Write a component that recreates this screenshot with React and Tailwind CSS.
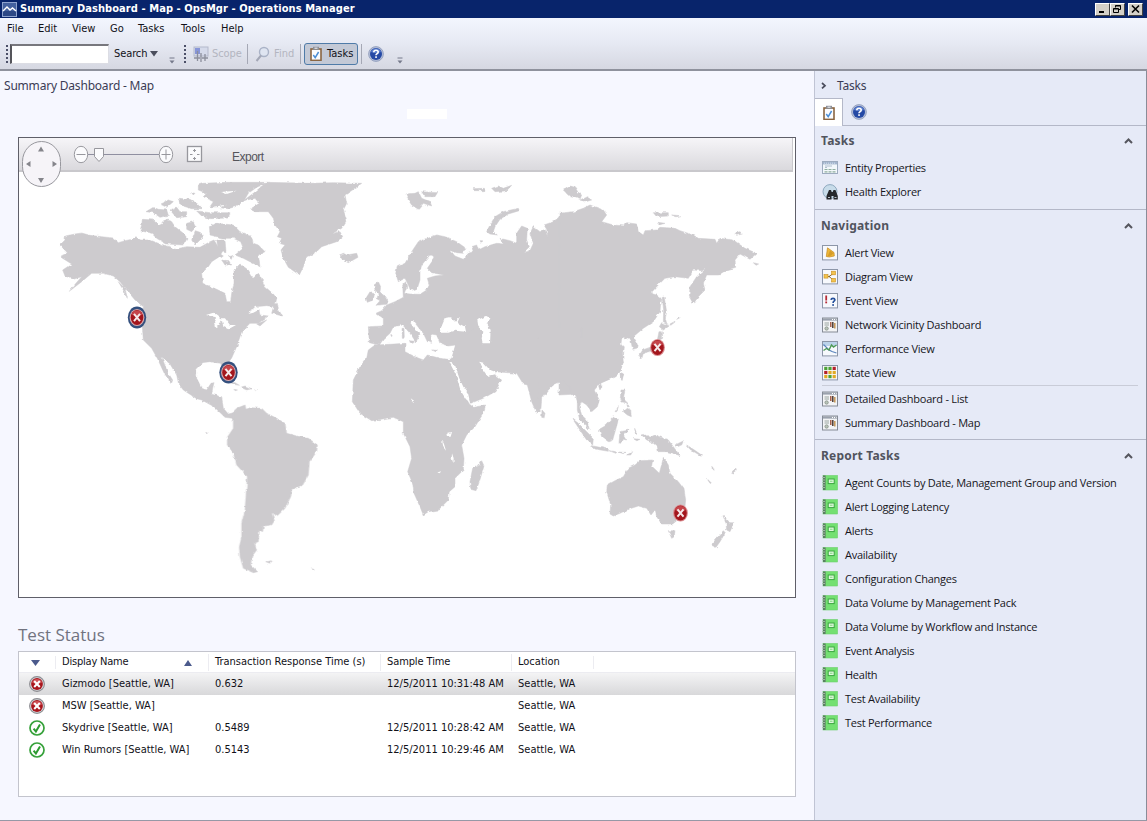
import React from "react";

const LAND = "#cdcbce";

function ErrorIcon({ size = 16, ring = "#8d8d92" }) {
  return (
    <svg width={size} height={size} viewBox="0 0 16 16" className="block shrink-0">
      <circle cx="8" cy="8" r="7.4" fill="#d9d9dc" stroke={ring} strokeWidth="1.1" />
      <circle cx="8" cy="8" r="5.9" fill="#a8161d" />
      <path d="M3 6.5a5.3 5.3 0 0 1 10 0q-5 2.5-10 0z" fill="#cf5257" />
      <path d="M5.2 5l5.6 6M10.8 5l-5.600 6" stroke="#fff" strokeWidth="2" />
    </svg>
  );
}

function OkIcon() {
  return (
    <svg width="16" height="16" viewBox="0 0 16 16" className="block shrink-0">
      <circle cx="8" cy="8" r="7" fill="#fff" stroke="#36a13a" strokeWidth="1.7" />
      <path d="M4.6 8.6l2.3 2.8L11 4.6" fill="none" stroke="#2c9a30" strokeWidth="2" />
    </svg>
  );
}

function HelpIcon() {
  return (
    <svg width="16" height="16" viewBox="0 0 16 16" className="block shrink-0">
      <circle cx="8" cy="8" r="7.4" fill="#b4bfd8" stroke="#8a97b8" strokeWidth=".8" />
      <circle cx="8" cy="8" r="6" fill="#2549a5" />
      <path d="M3 6a5.3 5.3 0 0 1 10 0q-5 2-10 0z" fill="#5c7fce" />
      <path d="M5.8 6.2q0-2 2.2-2t2.2 1.8q0 1.2-1.2 1.8-1 .5-1 1.5" fill="none" stroke="#fff" strokeWidth="1.6" />
      <rect x="7.2" y="10.3" width="1.7" height="1.6" fill="#fff" />
    </svg>
  );
}

function ClipIcon() {
  return (
    <svg width="16" height="16" viewBox="0 0 16 16" className="block shrink-0">
      <rect x="2.2" y="2.2" width="11.6" height="12.8" fill="#8a6542" />
      <rect x="3.8" y="3.8" width="8.4" height="9.8" fill="#fbfcff" />
      <rect x="5" y=".8" width="6" height="3" fill="#8b8e96" />
      <rect x="6.5" y="1.6" width="3" height="1.2" fill="#e6e6ea" />
      <path d="M5.3 9l1.9 2.6L10.6 6" fill="none" stroke="#4b8ed6" strokeWidth="1.5" />
    </svg>
  );
}

const Frame = ({ children }) => (
  <svg width="16" height="16" viewBox="0 0 16 16" className="block shrink-0">
    <rect x=".5" y=".5" width="15" height="14.4" fill="#f7f9fd" stroke="#8c96a8" />
    {children}
  </svg>
);

const dots = ["#e0aa25", "#4ca136", "#b3202a"];
const stateOrder = [1, 1, 2, 2, 0, 0, 0, 1, 0];

function Icon({ kind }) {
  switch (kind) {
    case "entity":
      return (
        <svg width="16" height="16" viewBox="0 0 16 16" className="block shrink-0">
          <rect x=".5" y="1.5" width="15" height="12" fill="#f2f7fb" stroke="#9dabbf" />
          <rect x="1" y="2" width="14" height="2.4" fill="#a3b5ce" />
          <path d="M2 3.200h12" stroke="#d5dfeb" strokeDasharray="1 1" />
          <path d="M3 6h7M3 7.500h2" stroke="#9fb0c4" strokeWidth=".8" />
          <path d="M2.500 9.500h3M6.500 9.500h3M10.500 9.500h3M2.500 11.800h3M6.500 11.800h3M10.500 11.800h3" stroke="#8fae9f" strokeWidth="1.200" />
        </svg>
      );
    case "health":
      return (
        <svg width="16" height="16" viewBox="0 0 16 16" className="block shrink-0">
          <circle cx="8" cy="7.600" r="7" fill="#c8dcea" stroke="#8fa9bf" />
          <path d="M4.500 15.500V12L7 6h2l.7 2h1L11.500 6h2l2.300 6v3.500h-4.300V12h-2v3.500z" fill="#26282c" />
          <path d="M6 13.500h2M12.500 13.500h2" stroke="#b9c2cc" />
        </svg>
      );
    case "alert":
      return (
        <Frame>
          <path d="M5.500 2.800L12 7.500l.3 3.500-5 1-3-.5z" fill="#eeb83a" stroke="#c58a1c" strokeWidth=".7" />
          <path d="M8 5.500l3.500 2.800-2.500 2.500-3.500.5z" fill="#c98f1f" opacity=".65" />
        </Frame>
      );
    case "diagram":
      return (
        <Frame>
          <path d="M5 7.500h3M12 4L7 7.500l5 4" fill="none" stroke="#8a6a30" />
          <rect x="2" y="5.500" width="4" height="3.600" fill="#f3c34f" stroke="#c98f1f" strokeWidth=".6" />
          <rect x="9.500" y="2.200" width="4" height="3.600" fill="#f3c34f" stroke="#c98f1f" strokeWidth=".6" />
          <rect x="9.500" y="9.400" width="4" height="3.600" fill="#f3c34f" stroke="#c98f1f" strokeWidth=".6" />
        </Frame>
      );
    case "event":
      return (
        <Frame>
          <path d="M4.200 2.500v5" stroke="#b62a35" strokeWidth="1.800" />
          <rect x="3.300" y="8.500" width="1.800" height="1.800" fill="#b62a35" />
          <path d="M9 6.800q.2-1.500 2-1.500t1.900 1.500q0 1-1 1.500-.8.400-.8 1.600" fill="none" stroke="#26509c" strokeWidth="1.700" />
          <rect x="10.200" y="11.200" width="1.800" height="1.600" fill="#26509c" />
        </Frame>
      );
    case "dashboard":
      return (
        <svg width="16" height="16" viewBox="0 0 16 16" className="block shrink-0">
          <rect x=".5" y="1" width="15" height="14" fill="#f3f4f6" stroke="#858b96" />
          <rect x="1" y="1.400" width="14" height="2.200" fill="#9aa1ad" />
          <path d="M10 2.500h1M12 2.500h1M14 2.500h.6" stroke="#fff" />
          <path d="M2.500 6h4.500M2.500 8h4.500" stroke="#9aa5a0" />
          <circle cx="4.600" cy="11.500" r="1.700" fill="#b9c4b9" stroke="#7e8a80" strokeWidth=".7" />
          <path d="M8.800 5v5" stroke="#a2543a" strokeWidth="1.400" />
          <path d="M10.800 5v6" stroke="#4a3c34" strokeWidth="1.500" />
          <path d="M12.800 6v5.500" stroke="#c28f4a" strokeWidth="1.400" />
        </svg>
      );
    case "perf":
      return (
        <Frame>
          <rect x="1" y="1" width="14" height="4" fill="#bcd3ea" />
          <path d="M1.500 3.500L7 9l3 1.500 4.500 1.500" fill="none" stroke="#5b84bd" strokeWidth="1.200" />
          <path d="M1.500 9.500l3-2 2.500 1.500 2.500-5 2 2 3-2" fill="none" stroke="#4f9a56" strokeWidth="1.400" />
        </Frame>
      );
    case "state":
      return (
        <Frame>
          {stateOrder.map((c, i) => (
            <rect key={i} x={2.2 + (i % 3) * 4.2} y={1.8 + Math.floor(i / 3) * 4.1} width="3.200" height="3.200" fill={dots[c]} />
          ))}
        </Frame>
      );
    default:
      return (
        <svg width="16" height="16" viewBox="0 0 16 16" className="block shrink-0">
          <rect x="1" y=".5" width="14.500" height="14.500" fill="#74e072" stroke="#6ccf6c" strokeWidth=".6" />
          <rect x="1" y=".5" width="2.600" height="14.500" fill="#5b7f63" />
          <path d="M0 2.500h3M0 5h3M0 7.500h3M0 10h3M0 12.500h3" stroke="#a9bcae" strokeWidth=".9" />
          <rect x="6.200" y="4" width="6" height="4.600" fill="#e0f7dd" stroke="#3aa641" />
          <rect x="8" y="5.700" width="2.500" height="1.200" fill="#8fdc8e" />
        </svg>
      );
  }
}

function Caret() {
  return (
    <svg width="9" height="6" viewBox="0 0 9 6" className="block">
      <path d="M1 5l3.500-3.500L8 5" fill="none" stroke="#55565e" strokeWidth="2" />
    </svg>
  );
}

function SectionHead({ children }) {
  return (
    <div className="flex h-[30px] items-center justify-between pr-[13px] pl-[6px]">
      <span className="font-['Noto_Sans',sans-serif] text-[12px] leading-[16px] font-bold tracking-[0.2px] text-[#51545e]">{children}</span>
      <Caret />
    </div>
  );
}

function Item({ icon, children }) {
  return (
    <div className="flex h-6 items-center gap-[7px] pl-[7px]">
      <Icon kind={icon} />
      <span className="font-['Open_Sans',sans-serif] text-[11px] leading-[16px] tracking-[-0.25px] whitespace-nowrap text-[#16161c]">{children}</span>
    </div>
  );
}

function Overflow() {
  return (
    <svg width="6" height="7" viewBox="0 0 6 7" className="block">
      <path d="M.5 1h5" stroke="#75798a" />
      <path d="M.5 3.500h5L3 6.500z" fill="#75798a" />
    </svg>
  );
}

function Grip() {
  return (
    <svg width="2" height="18" viewBox="0 0 2 18" className="block">
      <path d="M1 0v18" stroke="#4c5068" strokeWidth="2" strokeDasharray="2 2" />
    </svg>
  );
}

const NA = "M150 345L165 330 166 318 195 312 215 309 240 316 275 320 310 324 325 338 345 332 365 328 378 320 392 330 420 330 450 342 480 350 495 358 530 350 570 352 600 335 612 330 625 352 645 352 628 380 605 395 595 410 575 430 578 460 620 478 645 490 650 515 662 515 665 490 672 460 672 420 690 402 715 420 730 445 745 430 752 440 765 470 790 492 800 505 795 530 770 527 735 530 720 545 745 532 750 555 775 558 745 580 720 580 695 605 680 650 665 684 650 704 650 732 642 735 632 700 600 695 575 698 560 715 560 745 575 775 590 780 603 760 612 758 608 775 605 793 635 800 640 835 655 852 680 846 690 856 676 866 645 862 612 830 575 810 560 806 520 780 506 762 500 735 480 702 455 680 472 725 488 750 484 762 462 728 442 685 425 655 400 630 397 590 400 530 375 510 350 480 330 455 310 438 280 430 245 430 215 455 178 484 196 462 215 440 190 448 165 438 158 420 185 402 150 380 172 368Z";

const C4 = [
  "M397 268L430 270 445 285 470 270 485 275 495 290 520 310 532 325 520 345 470 342 440 325 425 310 390 302 395 285Z",
  "M408 245L430 232 445 238 470 240 475 256 450 262 430 248Z",
  "M450 222L475 210 490 215 470 232Z",
  "M505 205L540 208 560 220 575 236 545 236 510 225Z",
  "M480 240L500 232 510 245 530 245 530 260 500 263Z",
  "M530 280L550 275 558 290 545 305 530 298Z",
  "M556 302L570 307 580 315 570 330 555 345 545 330Z",
  "M560 243L600 248 660 248 655 264 600 266 575 258Z",
  "M598 290L615 280 640 285 660 295 640 312 615 316 600 308Z",
  "M565 165L580 160 650 157 720 157 775 157 740 172 715 190 700 215 675 230 655 236 600 230 610 215 580 200 590 190 565 180Z",
  "M545 188L555 190 550 195Z",
  "M325 455L345 475 352 505 340 480Z",
  "M635 390L655 392 662 405 645 405ZM625 368L640 378 632 384ZM655 380L668 376 664 388Z",
];

const C5 = [
  "M30 175L50 160 100 165 120 185 155 200 160 220 175 225 195 245 175 255 180 290 150 275 130 265 105 255 130 235 122 215 100 205 70 205 30 195Z",
  "M50 210L75 210 78 245 55 240Z",
  "M200 37L330 40 400 38 485 40 465 55 435 75 440 100 430 120 440 150 425 175 395 192 420 185 428 200 410 215 365 230 345 250 320 260 310 290 298 315 265 292 250 265 243 240 255 225 238 220 245 205 232 200 240 185 225 165 220 145 205 125 165 125 150 118 178 100 165 85 130 92 160 70Z",
  "M418 255L430 250 440 255 470 250 474 262 445 278 428 270Z",
  "M215 430L222 405 232 400 235 418 247 438Z",
  "M170 462L200 450 180 468Z",
];

const C6 = [
  "M85 470L130 468 130 445 108 430 125 422 140 405 165 395 190 382 188 345 197 335 200 350 193 370 210 372 240 373 260 360 268 345 262 325 285 318 312 315 275 308 262 295 285 262 270 255 245 285 240 305 240 330 232 355 212 362 205 345 195 325 175 335 167 310 172 290 195 280 215 245 235 215 260 205 290 195 315 200 350 215 378 235 370 250 350 248 330 240 345 258 370 268 385 250 400 245 395 230 410 225 415 240 435 230 470 220 490 222 480 205 510 212 530 220 530 190 545 168 562 175 560 210 568 230 550 248 570 242 580 220 570 190 580 170 600 185 615 178 623 202 620 178 612 165 640 155 665 135 725 122 725 605 345 605 332 575 347 525 325 528 300 520 290 495 272 492 275 520 262 515 250 490 240 478 218 450 208 455 222 475 240 492 228 516 210 490 188 465 160 470 150 490 130 508 118 525 88 518Z",
  "M102 345L115 335 122 350 120 365 135 380 145 395 140 403 108 406 120 392 108 385 118 372 105 360Z",
  "M78 385L90 365 104 368 100 390 82 397Z",
  "M198 72L225 70 235 65 245 85 270 95 275 108 250 100 235 118 215 105 205 90Z",
  "M245 65L292 68 285 80 255 80Z",
  "M440 185L450 165 465 140 490 125 535 115 538 122 505 132 480 148 465 170 460 185 472 195 450 192Z",
  "M398 56L430 55 435 62 405 62Z",
  "M455 55L475 48 490 55 515 46 500 62 465 65Z",
  "M675 60L690 48 705 52 715 68 725 75 720 88 700 80 682 72Z",
  "M186 475L192 475 193 505 187 505ZM207 512L226 514 218 520ZM275 540L292 541 288 545ZM152 494L157 494 155 500ZM420 212L428 212 425 220Z",
];

const C7 = [
  "M-3 100L40 95 70 85 90 75 130 90 140 105 125 125 160 135 195 138 200 128 230 132 235 155 250 165 255 152 290 150 300 142 345 145 360 152 400 165 415 175 465 178 470 190 480 175 520 180 555 205 590 220 570 238 540 222 525 240 527 262 500 270 475 285 440 285 430 310 435 330 415 350 400 372 388 350 390 320 410 290 440 265 425 272 400 270 385 295 345 290 315 295 290 320 272 340 290 345 303 355 300 395 280 425 250 445 220 470 232 490 230 505 218 508 212 480 190 472 170 482 190 500 188 520 190 545 180 575 165 590 120 610 95 640 -3 645Z",
  "M10 30L35 20 45 35 60 40 55 55 30 50ZM60 60L80 50 95 60 75 66Z",
  "M280 98L325 98 325 108 290 110ZM335 105L362 107 350 110ZM293 127L315 130 300 134ZM522 160L540 155 547 162 530 166ZM580 248L596 252 588 256Z",
  "M306 350L312 348 320 395 316 415 320 430 310 425 311 390Z",
  "M298 440L305 428 328 438 310 450Z",
  "M330 432L345 424 344 427 332 436ZM350 418L360 410 360 413Z",
  "M297 455L307 455 308 475 295 482 290 500 270 515 248 520 236 530 248 510 275 500 290 490Z",
  "M238 520L250 520 246 534 240 536Z",
  "M183 580L191 582 186 602ZM115 615L126 615 120 630Z",
];

const C9 = [
  "M105 45L150 43 195 40 195 65 225 80 250 90 262 75 300 85 325 88 345 85 350 140 370 190 388 222 400 232 437 225 430 250 405 290 380 315 365 345 372 385 370 420 345 445 345 470 328 485 325 510 295 540 265 545 250 555 240 530 222 490 218 460 203 425 215 385 210 350 190 310 190 275 160 262 95 272 60 250 37 215 40 150 60 110 80 85 85 60Z",
  "M335 92L347 45 400 -5 725 -5 725 160 695 190 672 150 650 155 625 180 605 205 603 235 590 250 575 215 562 165 550 162 530 130 465 125 465 135 485 150 465 185 430 205 392 220 375 185 360 155 345 125Z",
  "M425 392L432 408 418 455 408 482 392 478 390 455 398 415 415 408Z",
  "M606 240L615 250 612 265 605 262Z",
];

const C10 = [
  "M-5 -5L245 -5 240 40 250 65 240 95 215 115 180 130 155 135 165 155 178 180 172 200 155 215 140 195 125 185 118 200 125 225 140 240 148 268 135 255 118 235 112 210 112 185 105 160 95 165 90 145 72 120 40 135 10 160 -5 175Z",
  "M98 237L115 250 140 275 160 295 158 315 140 300 120 270Z",
  "M155 317L180 322 205 328 205 334 165 327Z",
  "M178 268L195 258 222 230 235 240 228 265 218 300 205 305 185 290Z",
  "M240 275L268 270 265 275 248 280 260 300 250 298 245 310 237 308Z",
  "M243 150L255 150 251 175 260 188 246 186 241 170Z",
  "M250 215L262 205 272 210 274 230 262 225ZM260 185L268 200 262 200ZM225 215L235 200 230 215Z",
  "M207 332L230 336 228 340ZM235 336L255 337 250 341ZM260 345L278 335 272 345Z",
  "M305 285L320 282 330 292 345 285 385 300 400 320 420 347 395 338 380 335 355 335 352 320 335 305 320 300Z",
  "M405 315L430 303 425 315 408 320ZM440 315L460 328 485 345 478 345 450 328ZM500 415L515 430 510 430ZM515 375L522 390 517 390ZM575 400L588 385 582 402Z",
  "M284 265L290 280 286 280ZM280 296L300 298 290 302Z",
  "M202 435L225 422 250 410 265 385 285 375 300 362 338 360 335 378 358 400 366 370 370 352 385 375 390 400 415 425 432 448 437 480 435 500 425 530 398 552 365 552 350 530 345 510 333 525 320 505 295 498 265 508 240 520 220 528 210 522 212 495 200 455Z",
  "M385 572L405 572 403 590 395 595Z",
  "M548 525L560 538 570 548 582 548 570 575 560 570 558 550Z",
  "M550 572L556 578 540 605 528 622 513 615 530 595Z",
  "M182 130L186 142 180 146ZM245 98L250 105 244 120Z",
];

const ISL8 = [
  "M328 96L345 98 358 106 340 103ZM362 112L375 108 395 116 380 120ZM342 118L352 120 345 122ZM404 118L412 119 408 122Z",
  "M340 185L350 175 375 165 378 178 390 173 425 175 440 190 470 205 495 220 500 250 530 258 565 265 592 285 590 305 568 335 565 375 548 405 515 418 512 440 495 475 472 497 455 488 463 512 455 525 430 528 428 545 418 540 415 575 403 580 410 600 395 620 392 645 413 665 400 668 370 655 360 620 358 590 365 560 365 520 375 480 382 380 350 345 340 310 322 285 322 262 340 235Z",
  "M437 635L457 632 450 640ZM575 656L586 660 580 661ZM260 247L265 249 262 252Z",
];

const WATER = [
  ["translate(340 170) scale(.33333)", "M300 480L315 445 330 442 345 455 360 440 352 458 375 470 378 485 345 482 325 488 300 488ZM412 450L440 438 453 448 440 460 452 480 450 520 428 520 425 505 430 485 415 470Z"],
  ["translate(340 330) scale(.33333)", "M328 96L345 105 358 145 370 170 384 190 390 216 378 208 362 182 348 135ZM418 95L430 98 445 115 465 122 466 132 442 138 428 118ZM322 308L336 306 332 320 324 320ZM306 330L312 342 318 362 310 352ZM336 370L341 385 340 400 335 385ZM212 205L222 212 220 220ZM292 427L305 424 298 430Z"],
  ["translate(200 170) scale(.33333)", "M18 435L40 428 62 445 75 445 90 465 108 465 85 478 70 470 65 448 58 465 45 475 42 455 48 442ZM145 432L165 415 185 412 180 418 160 428ZM0 92L30 88 22 94ZM60 66L110 62 80 72ZM30 112L80 104 60 114Z"],
];

const GROUPS = [
  ["translate(10 130) scale(.33333)", [NA, ...C4]],
  ["translate(200 170) scale(.33333)", C5],
  ["translate(340 170) scale(.33333)", C6],
  ["translate(560 180) scale(.33333)", C7],
  ["translate(340 330) scale(.33333)", C9],
  ["translate(540 340) scale(.33333)", C10],
  ["translate(120 350) scale(.33333)", ISL8],
];

function WorldMap() {
  return (
    <svg width="776" height="459" viewBox="19 138 776 459" className="block">
      <defs>
        <filter id="coast" x="-2%" y="-2%" width="104%" height="104%">
          <feTurbulence type="fractalNoise" baseFrequency="0.22" numOctaves="2" seed="4" />
          <feDisplacementMap in="SourceGraphic" scale="3" xChannelSelector="R" yChannelSelector="G" />
        </filter>
      </defs>
      <g filter="url(#coast)">
        {GROUPS.map(([t, paths]) => (
          <g key={t} transform={t} fill={LAND} stroke={LAND} strokeWidth="1.5">
            {paths.map((d, i) => (
              <path key={i} d={d} />
            ))}
          </g>
        ))}
        {WATER.map(([t, d]) => (
          <path key={t} transform={t} d={d} fill="#fff" />
        ))}
      </g>
    </svg>
  );
}

function Marker({ x, y, ringed }) {
  return (
    <g transform={`translate(${x} ${y})`}>
      {ringed && <ellipse rx="9.200" ry="11" fill="#34507e" />}
      <ellipse rx="7.400" ry="8.600" fill={ringed ? "#d9a9ad" : "#d98b8f"} />
      <ellipse rx="6.300" ry="7.400" fill="#a3161d" />
      <path d="M-5.500-3a6 6.800 0 0 1 11 0q-5.500 3-11 0z" fill="#c5454b" />
      <path d="M-3-3.600l6 7.200M3-3.600l-6 7.200" stroke="#f6e9ea" strokeWidth="2" />
    </g>
  );
}

function MapOverlay() {
  return (
    <svg width="776" height="459" viewBox="19 138 776 459" className="absolute inset-0 block">
      <g stroke="#97979d" fill="#fbfbfd">
        <rect x="22.500" y="141.500" width="38" height="45" rx="19" ry="20" fill="#f6f4f8" />
        <path d="M87 154.500h72" strokeWidth="1.200" stroke="#8f8fa0" />
        <ellipse cx="81" cy="154.500" rx="6.700" ry="8.200" />
        <ellipse cx="166" cy="154.500" rx="6.700" ry="8.200" />
        <path d="M94.500 148.500h9v8l-4.500 5-4.500-5z" />
        <path d="M76.500 154.500h9M161.500 154.500h9M166 149.500v10" fill="none" />
        <rect x="187.500" y="146.500" width="14" height="15" strokeWidth="1.300" />
        <path d="M194.500 149v3M194.500 157v3M190 154.500h2.500M197 154.500h2.500M193 150.500h3M193 158.500h3" fill="none" />
      </g>
      <path d="M41 146.500l3 5h-6zM41 183l3-5h-6zM26 164l4.500-3v6zM57 164l-4.500-3v6z" fill="#85858b" />
      <Marker x="137" y="317.500" ringed />
      <Marker x="228.500" y="372.500" ringed />
      <Marker x="657.500" y="347.500" />
      <Marker x="680.500" y="513" />
    </svg>
  );
}

const rows = [
  [false, "Gizmodo [Seattle, WA]", "0.632", "12/5/2011 10:31:48 AM"],
  [false, "MSW [Seattle, WA]", "", ""],
  [true, "Skydrive [Seattle, WA]", "0.5489", "12/5/2011 10:28:42 AM"],
  [true, "Win Rumors [Seattle, WA]", "0.5143", "12/5/2011 10:29:46 AM"],
];

const reports = [
  "Agent Counts by Date, Management Group and Version",
  "Alert Logging Latency",
  "Alerts",
  "Availability",
  "Configuration Changes",
  "Data Volume by Management Pack",
  "Data Volume by Workflow and Instance",
  "Event Analysis",
  "Health",
  "Test Availability",
  "Test Performance",
];

const menu = [
  ["File", "w-[31px]"],
  ["Edit", "w-[34px]"],
  ["View", "w-[38px]"],
  ["Go", "w-[28px]"],
  ["Tasks", "w-[43px]"],
  ["Tools", "w-[40px]"],
  ["Help", "w-[40px]"],
];

const GRID = "grid grid-cols-[36px_153px_172px_131px_82px_1fr] items-center whitespace-nowrap";

function TitleButton({ children }) {
  return (
    <div className="flex h-[13px] w-[15px] items-center justify-center border border-t-white border-r-[#404040] border-b-[#404040] border-l-white bg-[#d4d0c8]">
      <svg width="11" height="10" viewBox="0 0 11 10" className="block" fill="none" stroke="#000">
        {children}
      </svg>
    </div>
  );
}

export default function App() {
  return (
    <div className="flex h-[821px] w-[1147px] flex-col overflow-hidden bg-[#f6f7ff] font-['DejaVu_Sans_Condensed','DejaVu_Sans',sans-serif] text-[11px] text-[#111118]">
      <header className="flex h-[18px] shrink-0 items-center bg-[#08246b] pr-[4px] pl-[2px]">
        <svg width="15" height="15" viewBox="0 0 15 15" className="block">
          <rect x=".5" y=".5" width="14" height="14" fill="#44619f" stroke="#8ea3cf" />
          <rect x="1" y="9" width="13" height="5" fill="#2c4886" />
          <path d="M1 9l4-4 3 3 2.500-2L14 9" fill="none" stroke="#fff" strokeWidth="1.400" />
        </svg>
        <h1 className="ml-[3px] font-['DejaVu_Sans_Condensed','DejaVu_Sans',sans-serif] text-[11px] leading-[18px] font-bold tracking-[0.08px] whitespace-nowrap text-white">
          Summary Dashboard - Map - OpsMgr - Operations Manager
        </h1>
        <div className="ml-auto flex">
          <TitleButton><path d="M2 8h5" strokeWidth="2" /></TitleButton>
          <TitleButton>
            <path d="M3.500 3.500v-2h5v4h-2M3.500 2h5" />
            <path d="M1.500 4.500h5v4h-5zM1.500 5h5" />
          </TitleButton>
          <div className="w-[3px]" />
          <TitleButton><path d="M2 1.500l7 7M9 1.500l-7 7" strokeWidth="1.600" /></TitleButton>
        </div>
      </header>

      <div className="flex h-[53px] shrink-0 flex-col border-b-2 border-[#8f929d] bg-linear-to-b from-[#f3f6fe] via-[#e6e9f3] to-[#d6d8e2]">
        <nav className="flex h-[22px] items-center pt-px pl-[7px] text-[11px]">
          {menu.map(([m, w]) => (
            <span key={m} className={`${w} shrink-0`}>{m}</span>
          ))}
        </nav>
        <div className="flex h-[28px] items-center whitespace-nowrap">
          <div className="ml-[6px]"><Grip /></div>
          <div className="ml-[2px] h-[20px] w-[99px] border border-t-2 border-l-2 border-[#dcdde4] border-t-[#77777d] border-l-[#55555b] bg-white" />
          <span className="ml-[5px] w-[36px] tracking-[-0.1px]">Search</span>
          <svg width="8" height="6" viewBox="0 0 8 6" className="block"><path d="M0 0h8L4 5.500z" fill="#4a4d5c" /></svg>
          <div className="mt-[12px] ml-[11px]"><Overflow /></div>
          <div className="ml-[9px]"><Grip /></div>
          <svg width="16" height="16" viewBox="0 0 16 16" className="ml-[7px] block">
            <rect x="1" y="1" width="14" height="9" fill="#d5daea" stroke="#b4b9cb" />
            <rect x="2" y="2" width="5" height="6" fill="#8795d8" />
            <path d="M4.500 5v10M8 7v9M12 8v7M1 12h6M9 12h6" stroke="#8c8f9c" strokeWidth="1.300" />
          </svg>
          <span className="ml-[3px] w-[30px] tracking-[-0.1px] text-[#b3b5c0]">Scope</span>
          <div className="ml-[5px] h-[20px] w-px bg-[#a5a8b5]" />
          <svg width="15" height="16" viewBox="0 0 15 16" className="ml-[7px] block">
            <circle cx="9" cy="6" r="4.500" fill="#dfe5f1" stroke="#a9b2c6" strokeWidth="1.400" />
            <path d="M6 9.500L1.500 15" stroke="#a3a7b6" strokeWidth="2" />
          </svg>
          <span className="ml-[4px] w-[20px] text-[#b3b5c0]">Find</span>
          <div className="ml-[6px] h-[20px] w-px bg-[#a5a8b5]" />
          <div className="ml-[3px] flex h-[22px] w-[54px] items-center rounded-[3px] border border-[#4f7ba8] bg-[#c3c9d6] pl-[3px]">
            <ClipIcon />
            <span className="ml-[3px]">Tasks</span>
          </div>
          <div className="ml-[3px] h-[20px] w-px bg-[#a5a8b5]" />
          <div className="ml-[6px]"><HelpIcon /></div>
          <div className="mt-[12px] ml-[13px]"><Overflow /></div>
        </div>
      </div>

      <div className="flex h-[749px] shrink-0">
        <main className="flex w-[814px] shrink-0 flex-col">
          <h2 className="h-[30px] pl-[4px] font-['Noto_Sans',sans-serif] text-[12px] leading-[30px] tracking-[-0.2px] text-[#3b3c55]">Summary Dashboard - Map</h2>
          <div className="mt-[8px] ml-[407px] h-[10px] w-[40px] bg-white" />
          <section className="relative mt-[18px] ml-[18px] h-[461px] w-[778px] border border-[#5f5f69] bg-white">
            <WorldMap />
            <div className="absolute top-0 left-0 flex h-[34px] w-[774px] items-center border-r border-b-2 border-[#c9c8cc] bg-linear-to-b from-[#f6f5f8] to-[#dad9dd] pt-[5px] pl-[213px] font-['Liberation_Sans',sans-serif] text-[11px] tracking-[-0.5px] text-[#55555b]">
              <span className="text-[12px]">Export</span>
            </div>
            <MapOverlay />
          </section>
          <h3 className="mt-[25px] h-[24px] pl-[18px] font-['Open_Sans',sans-serif] text-[17px] leading-[24px] text-[#71737f]">Test Status</h3>
          <section className="mt-[4px] ml-[18px] h-[146px] w-[778px] border border-[#c3c4cd] bg-white">
            <div className={`${GRID} h-[21px] border-b border-[#ececf1] pt-px`}>
              <svg width="9" height="6" viewBox="0 0 9 6" className="ml-[12px] block"><path d="M0 0h9L4.500 6z" fill="#4b5a8c" /></svg>
              <div className="flex h-[13px] items-center border-l border-[#ececf1] pl-[6px]">
                <span className="w-[122px] tracking-[-0.2px]">Display Name</span>
                <svg width="8" height="6" viewBox="0 0 8 6" className="block"><path d="M0 6h8L4 0z" fill="#4b5a8c" /></svg>
              </div>
              <span className="border-l border-[#ececf1] pl-[6px]">Transaction Response Time (s)</span>
              <span className="border-l border-[#ececf1] pl-[6px] tracking-[-0.1px]">Sample Time</span>
              <span className="border-l border-[#ececf1] pl-[6px]">Location</span>
              <span className="h-[13px] border-l border-[#ececf1]" />
            </div>
            {rows.map(([ok, name, time, stamp], i) => (
              <div key={name} className={`${GRID} h-[22px] ${i === 0 ? "bg-linear-to-b from-[#f4f4f5] to-[#d8d8da]" : ""}`}>
                <div className="pl-[10px]">{ok ? <OkIcon /> : <ErrorIcon />}</div>
                <span className="pl-[7px]">{name}</span>
                <span className="pl-[7px]">{time}</span>
                <span className="pl-[7px]">{stamp}</span>
                <span className="pl-[7px]">Seattle, WA</span>
              </div>
            ))}
          </section>
        </main>

        <aside className="flex w-[333px] shrink-0 flex-col border-r border-l border-r-[#8a8c98] border-l-[#c0c4d4] bg-[#e6eaf7]">
          <div className="flex h-[27px] items-center pt-[3px] pl-[6px]">
            <svg width="6" height="8" viewBox="0 0 6 8" className="block"><path d="M1 1l3 2.700-3 2.700" fill="none" stroke="#4a4c5c" strokeWidth="1.700" /></svg>
            <span className="ml-[10px] font-['Noto_Sans',sans-serif] text-[12px] leading-[16px] tracking-[-0.2px] text-[#3b3c55]">Tasks</span>
          </div>
          <div className="flex h-[28px] items-stretch">
            <div className="flex w-[28px] items-center border-t border-r border-[#b4b8c8] bg-white pl-[6px]"><ClipIcon /></div>
            <div className="flex flex-1 items-center border-b border-[#b4b8c8] pt-px pl-[8px]"><HelpIcon /></div>
          </div>
          <div className="h-[84px] border-b border-[#b4b8c8]">
            <SectionHead>Tasks</SectionHead>
            <Item icon="entity">Entity Properties</Item>
            <Item icon="health">Health Explorer</Item>
          </div>
          <div className="h-[230px] border-b border-[#b4b8c8] pt-px">
            <SectionHead>Navigation</SectionHead>
            <Item icon="alert">Alert View</Item>
            <Item icon="diagram">Diagram View</Item>
            <Item icon="event">Event View</Item>
            <Item icon="dashboard">Network Vicinity Dashboard</Item>
            <Item icon="perf">Performance View</Item>
            <Item icon="state">State View</Item>
            <div className="mr-[8px] mb-px ml-[7px] h-px bg-[#c9ccd8]" />
            <Item icon="dashboard">Detailed Dashboard - List</Item>
            <Item icon="dashboard">Summary Dashboard - Map</Item>
          </div>
          <div className="pt-px">
            <SectionHead>Report Tasks</SectionHead>
            {reports.map((r) => (
              <Item key={r} icon="report">{r}</Item>
            ))}
          </div>
        </aside>
      </div>
      <div className="h-px shrink-0 bg-[#9698a6]" />
    </div>
  );
}
